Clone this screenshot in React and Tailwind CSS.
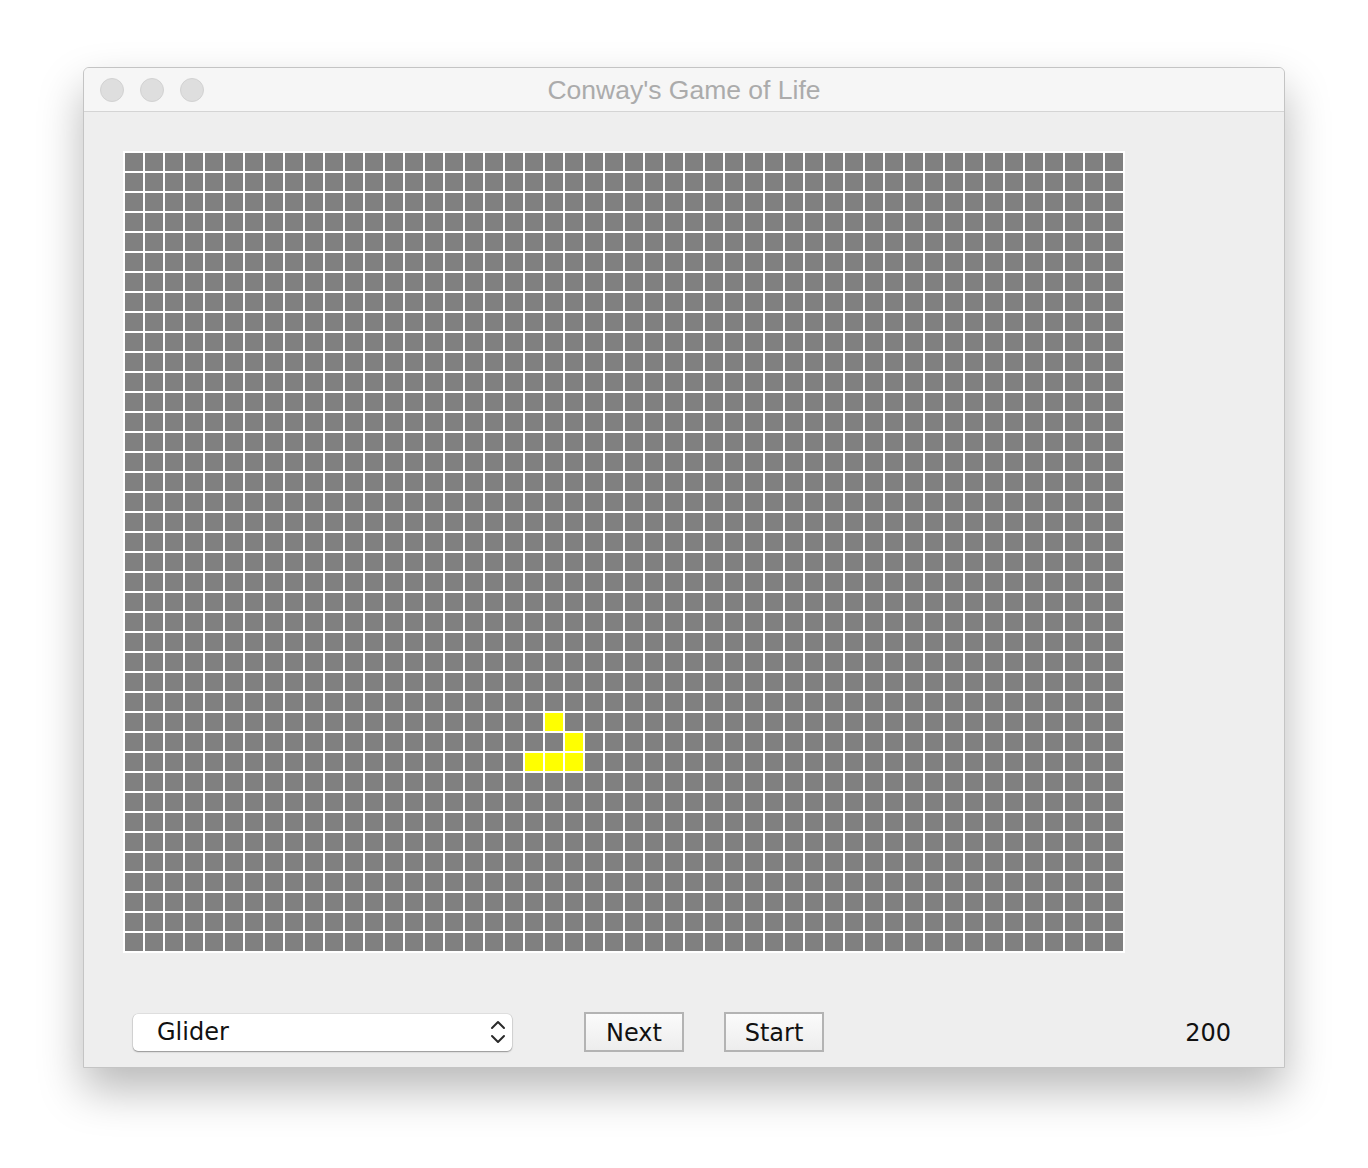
import { useMemo } from 'react'

const COLS = 50
const ROWS = 40
const ALIVE = new Set(['28-21', '29-22', '30-20', '30-21', '30-22'])

function TrafficLight() {
  return <span className="h-[24px] w-[24px] rounded-full border border-[#d2d2d2] bg-[#dedede]" />
}

function Board() {
  const cells = useMemo(() => {
    const list = []
    for (let r = 0; r < ROWS; r++) {
      for (let c = 0; c < COLS; c++) {
        list.push(ALIVE.has(`${r}-${c}`))
      }
    }
    return list
  }, [])

  return (
    <div className="grid w-[1002px] grid-cols-[repeat(50,20px)] bg-white p-[1px]">
      {cells.map((alive, i) => (
        <div key={i} className={`m-[1px] h-[18px] w-[18px] ${alive ? 'bg-[#ffff00]' : 'bg-[#808080]'}`} />
      ))}
    </div>
  )
}

function Chevrons() {
  return (
    <svg width="16" height="26" viewBox="0 0 16 26" fill="none" stroke="#2a2a2a" strokeWidth="2" strokeLinecap="round" strokeLinejoin="round">
      <path d="M2 9 L8 3 L14 9" />
      <path d="M2 17 L8 23 L14 17" />
    </svg>
  )
}

function PushButton({ children }) {
  return (
    <button className="flex h-[40px] w-[100px] items-center justify-center border-2 border-[#b3b3b3] bg-gradient-to-b from-[#fbfbfb] to-[#ededed] pt-[1px] text-[24px] text-[#111]">
      {children}
    </button>
  )
}

export default function App() {
  return (
    <div className="h-[1168px] w-[1368px] bg-white pl-[83px] pt-[67px] font-['DejaVu_Sans',sans-serif]">
      <div className="flex h-[1001px] w-[1202px] flex-col overflow-hidden rounded-t-[6px] border border-[#c4c4c4] bg-[#eeeeee] shadow-[0_22px_45px_rgba(0,0,0,0.28)]">
        <div className="relative flex h-[44px] items-center border-b border-[#d4d4d4] bg-[#f6f6f6] pl-[16px]">
          <div className="flex gap-[16px]">
            <TrafficLight />
            <TrafficLight />
            <TrafficLight />
          </div>
          <div className="absolute inset-0 flex items-center justify-center pt-[3px] font-['Liberation_Sans',sans-serif] text-[26.5px] text-[#ababab]">
            Conway's Game of Life
          </div>
        </div>

        <div className="flex flex-1 flex-col pl-[39px] pt-[39px]">
          <Board />

          <div className="mt-[59px] flex items-center">
            <div className="ml-[10px] flex h-[37px] w-[379px] items-center justify-between rounded-[5px] bg-white pl-[24px] pr-[6px] text-[24px] text-[#111] shadow-[0_1px_1.5px_rgba(0,0,0,0.35),0_0_0_0.5px_rgba(0,0,0,0.12)]">
              <span className="-mt-[1px]">Glider</span>
              <Chevrons />
            </div>
            <div className="ml-[72px] flex gap-[40px]">
              <PushButton>Next</PushButton>
              <PushButton>Start</PushButton>
            </div>
            <div className="ml-auto mr-[53px] pt-[2px] text-[24px] text-[#111]">200</div>
          </div>
        </div>
      </div>
    </div>
  )
}
